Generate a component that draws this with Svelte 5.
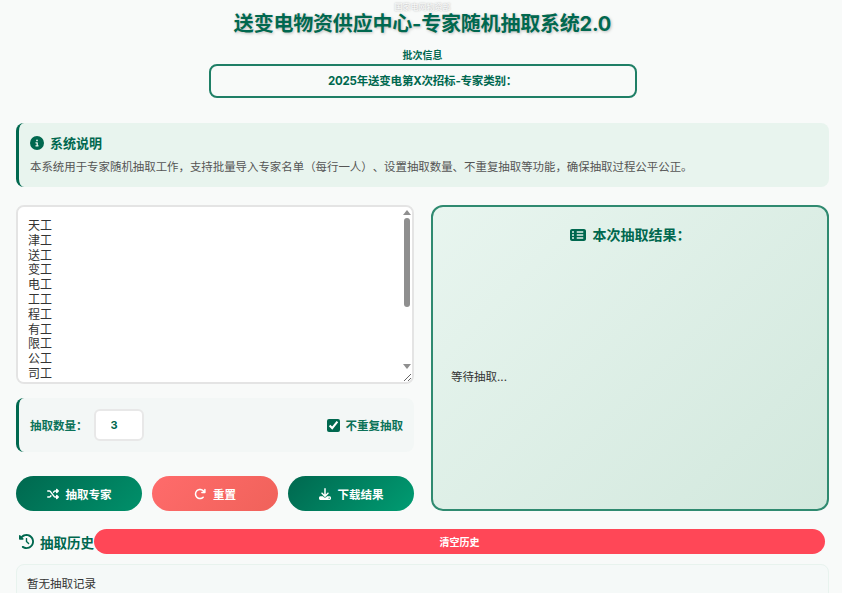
<script>
  let names = `天工
津工
送工
变工
电工
工工
程工
有工
限工
公工
司工
员工
专工`;
  let count = $state(3);
  let noRepeat = $state(true);
  let result = $state("等待抽取...");
</script>

<div class="page">
  <header class="header">
    <div class="ghost">国家电网物资部</div>
    <h1>送变电物资供应中心-专家随机抽取系统2.0</h1>
    <div class="batch-label">批次信息</div>
    <div class="batch-box">2025年送变电第X次招标-专家类别：</div>
  </header>

  <section class="notice">
    <h3>
      <svg class="ico" viewBox="0 0 512 512" width="14" height="14"><path fill="currentColor" d="M256 512A256 256 0 1 0 256 0a256 256 0 1 0 0 512zM216 336h24V272H216c-13.300 0-24-10.700-24-24s10.700-24 24-24h48c13.300 0 24 10.700 24 24v88h8c13.300 0 24 10.700 24 24s-10.700 24-24 24H216c-13.300 0-24-10.700-24-24s10.700-24 24-24zm40-208a32 32 0 1 1 0 64 32 32 0 1 1 0-64z"/></svg>
      系统说明
    </h3>
    <p>本系统用于专家随机抽取工作，支持批量导入专家名单（每行一人）、设置抽取数量、不重复抽取等功能，确保抽取过程公平公正。</p>
  </section>

  <div class="main">
    <div class="left">
      <div class="names-wrap">
        <textarea class="names" spellcheck="false" value={names}></textarea>
        <div class="scrollbar">
          <span class="arrow up"></span>
          <span class="thumb"></span>
          <span class="arrow down"></span>
        </div>
      </div>

      <div class="settings">
        <label class="count">
          抽取数量：
          <input type="number" bind:value={count} />
        </label>
        <label class="repeat">
          <input type="checkbox" bind:checked={noRepeat} />
          不重复抽取
        </label>
      </div>

      <div class="buttons">
        <button class="btn green">
          <svg viewBox="0 0 512 512" width="12" height="12"><path fill="currentColor" d="M403.800 34.400c12-5 25.700-2.200 34.900 6.900l64 64c6 6 9.400 14.100 9.400 22.600s-3.400 16.600-9.400 22.600l-64 64c-9.200 9.200-22.900 11.900-34.900 6.900s-19.800-16.600-19.800-29.600V160H352c-10.100 0-19.600 4.700-25.600 12.800L284 229.300 244 176l31.200-41.600C293.300 110.200 321.800 96 352 96h32V64c0-12.900 7.800-24.600 19.800-29.600zM164 282.700L204 336l-31.200 41.600C154.700 401.800 126.200 416 96 416H32c-17.700 0-32-14.300-32-32s14.300-32 32-32H96c10.100 0 19.600-4.700 25.600-12.800L164 282.700zm274.600 188c-9.200 9.200-22.900 11.900-34.900 6.900s-19.800-16.600-19.800-29.600V416H352c-30.200 0-58.700-14.200-76.800-38.400L121.600 172.800c-6-8.100-15.500-12.800-25.600-12.800H32c-17.700 0-32-14.300-32-32s14.300-32 32-32H96c30.200 0 58.700 14.200 76.800 38.400L326.400 339.200c6 8.100 15.500 12.800 25.600 12.800h32V320c0-12.900 7.800-24.600 19.800-29.600s25.700-2.200 34.900 6.900l64 64c6 6 9.400 14.100 9.400 22.600s-3.400 16.600-9.400 22.600l-64 64z"/></svg>
          抽取专家
        </button>
        <button class="btn red">
          <svg viewBox="0 0 512 512" width="12" height="12"><path fill="currentColor" d="M386.300 160H336c-17.700 0-32 14.300-32 32s14.300 32 32 32H464c17.700 0 32-14.300 32-32V64c0-17.700-14.300-32-32-32s-32 14.300-32 32v51.200L414.400 97.600c-87.500-87.500-229.300-87.500-316.800 0s-87.500 229.300 0 316.800 229.300 87.500 316.800 0c12.500-12.500 12.500-32.800 0-45.300s-32.800-12.500-45.300 0c-62.500 62.500-163.800 62.500-226.300 0s-62.500-163.800 0-226.300s163.800-62.500 226.300 0L386.300 160z"/></svg>
          重置
        </button>
        <button class="btn green alt">
          <svg viewBox="0 0 512 512" width="12" height="12"><path fill="currentColor" d="M288 32c0-17.700-14.300-32-32-32s-32 14.300-32 32V274.700l-73.400-73.400c-12.500-12.500-32.800-12.500-45.300 0s-12.500 32.800 0 45.300l128 128c12.500 12.500 32.800 12.500 45.300 0l128-128c12.500-12.500 12.500-32.800 0-45.300s-32.800-12.500-45.300 0L288 274.700V32zM64 352c-35.300 0-64 28.700-64 64v32c0 35.300 28.700 64 64 64H448c35.300 0 64-28.700 64-64V416c0-35.300-28.700-64-64-64H346.500l-45.300 45.300c-25 25-65.500 25-90.500 0L165.500 352H64zm368 56a24 24 0 1 1 0 48 24 24 0 1 1 0-48z"/></svg>
          下载结果
        </button>
      </div>
    </div>

    <div class="result">
      <h3>
        <svg viewBox="0 0 512 512" width="16" height="16"><path fill="currentColor" d="M64 64C28.700 64 0 92.700 0 128V384c0 35.300 28.700 64 64 64H448c35.300 0 64-28.700 64-64V128c0-35.300-28.700-64-64-64H64zm32 128a32 32 0 1 1 0-64 32 32 0 1 1 0 64zm120-56H424v48H216V136zM96 288a32 32 0 1 1 0-64 32 32 0 1 1 0 64zm120-56H424v48H216V232zM96 384a32 32 0 1 1 0-64 32 32 0 1 1 0 64zm120-56H424v48H216V328z"/></svg>
        本次抽取结果：
      </h3>
      <div class="result-body">{result}</div>
    </div>
  </div>

  <div class="history-head">
    <h3>
      <svg viewBox="0 0 512 512" width="15" height="15"><path fill="currentColor" d="M75 75L41 41C25.900 25.900 0 36.600 0 57.900V168c0 13.300 10.700 24 24 24H134.100c21.400 0 32.100-25.900 17-41l-30.800-30.800C155 85.500 203 64 256 64c106 0 192 86 192 192s-86 192-192 192c-40.800 0-78.600-12.700-109.700-34.400c-14.500-10.100-34.400-6.600-44.600 7.900s-6.600 34.400 7.900 44.600C151.200 495 201.700 512 256 512c141.400 0 256-114.600 256-256S397.400 0 256 0C185.300 0 121.300 28.700 75 75zm181 53c-13.300 0-24 10.700-24 24V256c0 6.400 2.500 12.500 7 17l72 72c9.400 9.400 24.600 9.400 33.900 0s9.400-24.600 0-33.900l-65-65V152c0-13.300-10.700-24-24-24z"/></svg>
      抽取历史
    </h3>
    <button class="clear">清空历史</button>
  </div>

  <div class="history">暂无抽取记录</div>
</div>

<style>
  :global(body) {
    margin: 0;
    background: #f8faf9;
    font-family: "Inter", "Noto Sans CJK SC", sans-serif;
    text-spacing-trim: space-all;
    overflow: hidden;
  }

  .page {
    height: 593px;
    overflow: hidden;
    padding: 0 13px 0 16px;
    width: 813px;
  }

  .header {
    text-align: center;
    position: relative;
  }

  .ghost {
    position: absolute;
    top: 3px;
    left: 0;
    right: 0;
    font-size: 8px;
    line-height: 9px;
    color: #fff;
    text-shadow: 0 0 2px rgba(0, 0, 0, 0.4);
  }

  h1 {
    margin: 0;
    padding-top: 9px;
    font-size: 20px;
    line-height: 30px;
    font-weight: 700;
    letter-spacing: -0.2px;
    color: #00684f;
    text-shadow: 1px 1px 3px rgba(0, 0, 0, 0.25);
  }

  .batch-label {
    margin-top: 9px;
    font-size: 10px;
    line-height: 14px;
    font-weight: 700;
    color: #00684f;
  }

  .batch-box {
    width: 424px;
    margin: 2px auto 0;
    border: 2px solid #1f7f66;
    border-radius: 8px;
    font-size: 11.500px;
    line-height: 30px;
    font-weight: 700;
    letter-spacing: -0.2px;
    color: #00684f;
  }

  .notice {
    background: #e8f4ee;
    border-left: 3px solid #00684f;
    border-radius: 8px;
    padding: 9px 10px 8px 11px;
    margin: 25px 0 18px;
    height: 47px;
  }

  .notice h3 {
    display: flex;
    align-items: center;
    gap: 6px;
    margin: 0;
    font-size: 13px;
    line-height: 22px;
    color: #00684f;
  }

  .notice p {
    margin: 5px 0 0;
    font-size: 11.430px;
    line-height: 17px;
    color: #555;
    white-space: nowrap;
  }

  .main {
    display: grid;
    grid-template-columns: 398px 398px;
    gap: 17px;
    height: 306px;
  }

  .left {
    display: flex;
    flex-direction: column;
  }

  .names-wrap {
    position: relative;
    height: 179px;
  }

  .names {
    display: block;
    box-sizing: border-box;
    width: 398px;
    height: 179px;
    padding: 12px 10px;
    border: 2px solid #e4e4e4;
    border-radius: 8px;
    background: #fff;
    font-family: inherit;
    font-size: 12px;
    line-height: 14.800px;
    color: #333;
    outline: none;
  }

  .scrollbar {
    position: absolute;
    top: 2px;
    right: 1px;
    bottom: 12px;
    width: 12px;
    display: flex;
    flex-direction: column;
    align-items: center;
    pointer-events: none;
  }

  .arrow {
    width: 0;
    height: 0;
    border-left: 4px solid transparent;
    border-right: 4px solid transparent;
  }

  .up {
    margin-top: 3px;
    border-bottom: 5px solid #8f8f8f;
  }

  .down {
    margin-top: auto;
    margin-bottom: 3px;
    border-top: 5px solid #8f8f8f;
  }

  .thumb {
    width: 6px;
    height: 89px;
    margin-top: 3px;
    border-radius: 3px;
    background: #8f8f8f;
  }

  .settings {
    display: flex;
    align-items: center;
    justify-content: space-between;
    height: 54px;
    margin-top: 14px;
    padding: 0 11px 0 11px;
    background: #f3f7f6;
    border-left: 3px solid #00684f;
    border-radius: 8px;
    box-sizing: border-box;
  }

  .count,
  .repeat {
    display: flex;
    align-items: center;
    font-size: 11.500px;
    font-weight: 700;
    color: #0b7259;
  }

  .count input {
    box-sizing: border-box;
    width: 50px;
    height: 32px;
    margin-left: 6px;
    padding: 0 0 0 15px;
    border: 2px solid #e8e8e8;
    border-radius: 6px;
    background: #fff;
    font-family: inherit;
    font-size: 11px;
    font-weight: 700;
    color: #00684f;
    outline: none;
    appearance: textfield;
  }

  .count input::-webkit-inner-spin-button,
  .count input::-webkit-outer-spin-button {
    appearance: none;
    margin: 0;
  }

  .repeat input {
    width: 13px;
    height: 13px;
    margin: 0 6px 0 0;
    accent-color: #00684f;
  }

  .buttons {
    display: grid;
    grid-template-columns: repeat(3, 126px);
    justify-content: space-between;
    margin-top: 24px;
  }

  .btn {
    display: flex;
    align-items: center;
    justify-content: center;
    gap: 7px;
    height: 35px;
    border: 0;
    border-radius: 18px;
    font-family: inherit;
    font-size: 11.500px;
    font-weight: 700;
    color: #fff;
  }

  .green {
    background: linear-gradient(135deg, #00684f, #00906a);
  }

  .alt {
    background: linear-gradient(135deg, #00684f, #009c72);
  }

  .red {
    background: linear-gradient(135deg, #ff6b6b, #f0625a);
  }

  .result {
    box-sizing: border-box;
    display: flex;
    flex-direction: column;
    border: 2px solid #2f8a70;
    border-radius: 12px;
    background: linear-gradient(135deg, #e8f5ef, #d2e8dd);
    padding: 16px 18px 4px;
  }

  .result h3 {
    display: flex;
    align-items: center;
    justify-content: center;
    gap: 7px;
    margin: 0;
    font-size: 14px;
    line-height: 24px;
    color: #00684f;
  }

  .result-body {
    flex: 1;
    display: flex;
    align-items: center;
    font-size: 11.500px;
    color: #333;
  }

  .history-head {
    display: flex;
    align-items: center;
    margin-top: 18px;
    height: 25px;
  }

  .history-head h3 {
    display: flex;
    align-items: center;
    gap: 6px;
    flex: none;
    margin: 0 0 0 3px;
    font-size: 13.500px;
    color: #00684f;
  }

  .clear {
    flex: 1;
    height: 25px;
    margin-right: 4px;
    border: 0;
    border-radius: 13px;
    background: #ff4757;
    font-family: inherit;
    font-size: 10px;
    font-weight: 700;
    color: #fff;
  }

  .history {
    margin-top: 10px;
    padding: 11px 10px;
    height: 60px;
    background: #f5f9f8;
    border: 1px solid #e8f3ee;
    border-radius: 8px;
    font-size: 11.500px;
    line-height: 16px;
    color: #333;
  }
</style>
